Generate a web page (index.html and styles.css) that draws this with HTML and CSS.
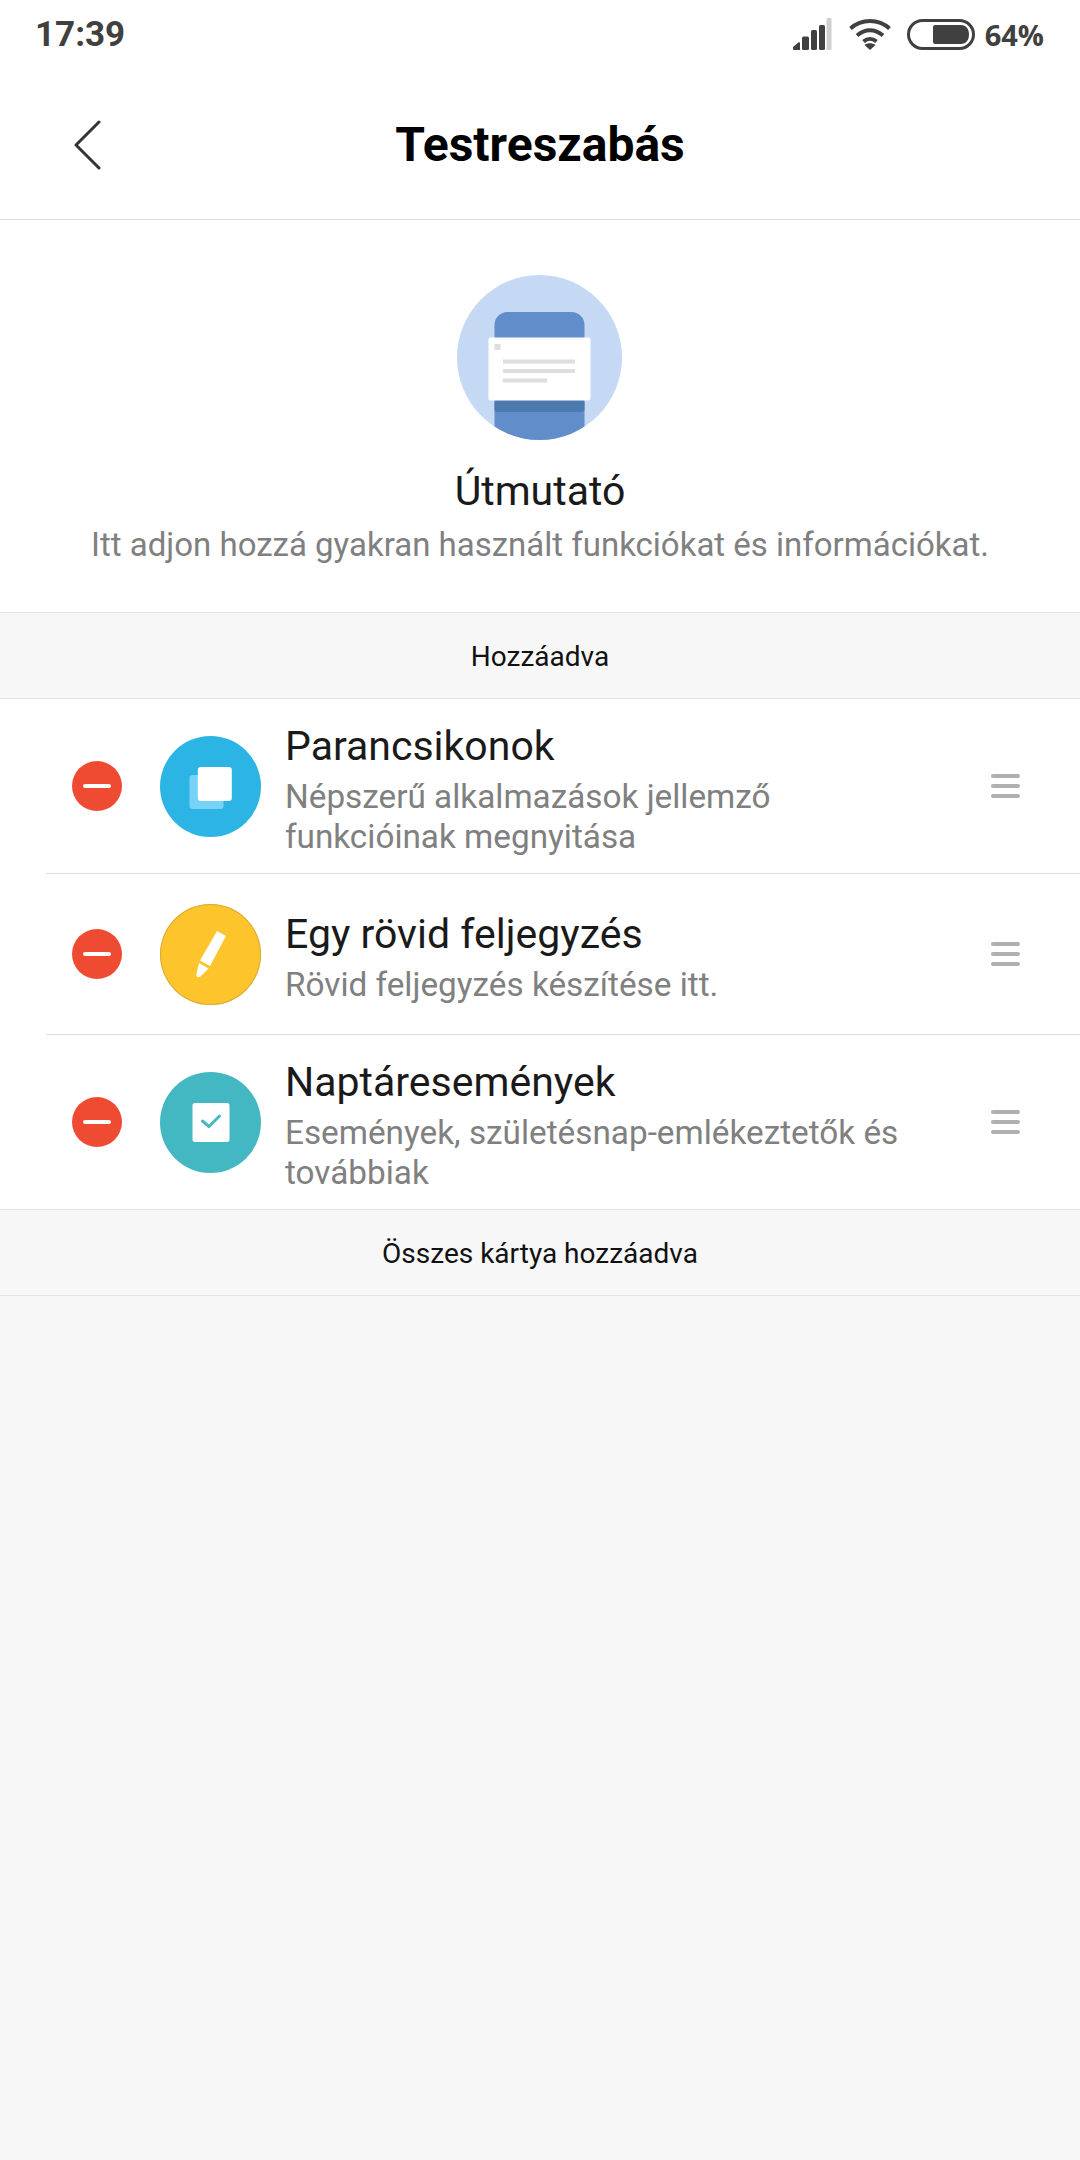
FILE: index.html
```html
<!DOCTYPE html>
<html lang="hu">
<head>
    <meta charset="UTF-8">
    <meta name="viewport" content="width=device-width, initial-scale=1.0">
    <title>Testreszabás</title>
    <link rel="stylesheet" href="styles.css">
</head>
<body>
    <!-- Status bar -->
    <div class="status-bar">
        <span class="clock">17:39</span>
        <div class="status-icons">
            <svg class="signal" width="40" height="32" viewBox="0 0 40 32">
                <path d="M1 29.5a1 1 0 0 1 .3-.7l5-4.3a1 1 0 0 1 1.7.7V32H2a1 1 0 0 1-1-1z" fill="#404040"/>
                <rect x="10" y="18.5" width="7" height="13.5" rx="1.5" fill="#404040"/>
                <rect x="19" y="12" width="6" height="20" rx="1.5" fill="#404040"/>
                <rect x="27" y="7" width="6" height="25" rx="1.5" fill="#404040"/>
                <rect x="34.500" y="0" width="5" height="32" rx="1" fill="#cfcfcf"/>
            </svg>
            <svg class="wifi" width="44" height="32" viewBox="0 0 44 32">
                <path d="M2.500 10.500C13.500 .5 30.500 .5 41.500 10.500M9 17.500c8-7 18-7 26 0M15.500 23.500c4-3.500 9-3.500 13 0" fill="none" stroke="#404040" stroke-width="4"/>
                <path d="M22 32l-5.500-5c3-2.500 8-2.500 11 0z" fill="#404040"/>
            </svg>
            <svg class="battery" width="68" height="31" viewBox="0 0 68 31">
                <rect x="1.500" y="1.500" width="65" height="28" rx="14" fill="none" stroke="#404040" stroke-width="3"/>
                <path d="M26 8a2 2 0 0 1 2-2h26c5 0 8 4 8 9.500S59 25 54 25H28a2 2 0 0 1-2-2z" fill="#404040"/>
            </svg>
            <span class="percent">64%</span>
        </div>
    </div>

    <!-- Title bar -->
    <div class="nav-bar">
        <svg class="back" width="28" height="50" viewBox="0 0 28 50">
            <path d="M26 2L3 25l23 23" fill="none" stroke="#333" stroke-width="3" stroke-linecap="round" stroke-linejoin="round"/>
        </svg>
        <h1>Testreszabás</h1>
    </div>

    <!-- Guide -->
    <div class="guide">
        <svg class="guide-art" width="165" height="165" viewBox="0 0 165 165">
            <defs>
                <clipPath id="guideClip"><circle cx="82.500" cy="82.500" r="82.500"/></clipPath>
            </defs>
            <circle cx="82.500" cy="82.500" r="82.500" fill="#c5d9f4"/>
            <g clip-path="url(#guideClip)">
                <path d="M37.500 50a13 13 0 0 1 13-13h64a13 13 0 0 1 13 13v115h-90z" fill="#618dcb"/>
                <rect x="37.500" y="125" width="90" height="12" rx="3" fill="#4d7aae"/>
            </g>
            <rect x="31.500" y="62.500" width="102" height="63" rx="2" fill="#fff"/>
            <rect x="37.500" y="69" width="6" height="6" fill="#dedede"/>
            <rect x="46" y="84.500" width="72" height="4" fill="#dedede"/>
            <rect x="46" y="94" width="72" height="4" fill="#dedede"/>
            <rect x="46" y="103.500" width="44" height="4" fill="#dedede"/>
        </svg>
        <div class="guide-title">Útmutató</div>
        <div class="guide-text">Itt adjon hozzá gyakran használt funkciókat és információkat.</div>
    </div>

    <div class="section-label">Hozzáadva</div>

    <!-- Added cards -->
    <div class="card-list">
        <div class="card card-tall">
            <span class="remove"></span>
            <span class="card-icon icon-blue">
                <svg width="60" height="60" viewBox="0 0 60 60">
                    <rect x="8.500" y="19" width="34" height="34" rx="3" fill="#76d2f6"/>
                    <rect x="16.800" y="11" width="34" height="34" rx="3" fill="#fff"/>
                </svg>
            </span>
            <div class="card-body">
                <div class="card-title">Parancsikonok</div>
                <div class="card-text">Népszerű alkalmazások jellemző funkcióinak megnyitása</div>
            </div>
            <span class="handle"><i></i><i></i><i></i></span>
        </div>
        <div class="card">
            <span class="remove"></span>
            <span class="card-icon icon-yellow">
                <svg width="60" height="60" viewBox="0 0 60 60">
                    <path d="M36 7l9 5L29 42l-10-5.500z" fill="#fff"/>
                    <path d="M18 39l9.500 5.500-8 8c-1 1-2.500 1-3.300.3-.7-.5-1-1.500-.8-2.500z" fill="#fff"/>
                </svg>
            </span>
            <div class="card-body">
                <div class="card-title">Egy rövid feljegyzés</div>
                <div class="card-text">Rövid feljegyzés készítése itt.</div>
            </div>
            <span class="handle"><i></i><i></i><i></i></span>
        </div>
        <div class="card card-tall">
            <span class="remove"></span>
            <span class="card-icon icon-teal">
                <svg width="60" height="60" viewBox="0 0 60 60">
                    <rect x="11.500" y="11" width="37" height="39" rx="2.500" fill="#fff"/>
                    <path d="M21.500 29l6.500 5.500L38.500 24" fill="none" stroke="#43b8c3" stroke-width="3" stroke-linecap="round" stroke-linejoin="round"/>
                </svg>
            </span>
            <div class="card-body">
                <div class="card-title">Naptáresemények</div>
                <div class="card-text">Események, születésnap-emlékeztetők és továbbiak</div>
            </div>
            <span class="handle"><i></i><i></i><i></i></span>
        </div>
    </div>

    <div class="section-label">Összes kártya hozzáadva</div>
</body>
</html>
```

FILE: styles.css
```css
html, body {
    margin: 0;
    padding: 0;
}
body {
    width: 1080px;
    height: 2160px;
    overflow: hidden;
    background-color: #f7f7f7;
    font-family: Roboto, sans-serif;
}
.status-bar {
    height: 68px;
    padding: 0 36px 0 35px;
    display: flex;
    justify-content: space-between;
    align-items: center;
    background-color: #fff;
    color: #404040;
}
.clock {
    font-size: 35px;
    font-weight: 700;
}
.status-icons {
    display: flex;
    align-items: center;
}
.signal {
    margin-right: 16px;
}
.wifi {
    margin-right: 15px;
}
.battery {
    margin-right: 10px;
}
.percent {
    font-family: "Open Sans", sans-serif;
    font-size: 29px;
    font-weight: 700;
}
.nav-bar {
    position: relative;
    height: 152px;
    padding-top: 2px;
    box-sizing: border-box;
    display: flex;
    align-items: center;
    justify-content: center;
    background-color: #fff;
    border-bottom: 1px solid #dcdcdc;
}
.back {
    position: absolute;
    left: 73px;
    top: 52px;
}
h1 {
    margin: 0;
    font-size: 48px;
    font-weight: 700;
    color: #000;
}
.guide {
    height: 392px;
    box-sizing: border-box;
    padding-top: 55px;
    display: flex;
    flex-direction: column;
    align-items: center;
    background-color: #fff;
}
.guide-art {
    margin-right: 2px;
}
.guide-title {
    margin-top: 26px;
    font-size: 41px;
    line-height: 50px;
    color: #1a1a1a;
}
.guide-text {
    margin-top: 7px;
    font-size: 33px;
    line-height: 44px;
    color: #808080;
}
.section-label {
    height: 83px;
    padding-top: 2px;
    display: flex;
    align-items: center;
    justify-content: center;
    border-top: 1px solid #e4e4e4;
    border-bottom: 1px solid #e4e4e4;
    font-size: 28px;
    color: #111;
}
.card-list {
    background-color: #fff;
}
.card {
    position: relative;
    height: 160px;
    display: flex;
    align-items: center;
    margin-left: 46px;
    border-bottom: 1px solid #dcdcdc;
}
.card-tall {
    height: 174px;
}
.card:last-child {
    border-bottom: none;
}
.remove {
    position: relative;
    flex: none;
    width: 50px;
    height: 50px;
    margin-left: 26px;
    border-radius: 50%;
    background-color: #ef4a32;
}
.remove::after {
    content: "";
    position: absolute;
    left: 11px;
    top: 23px;
    width: 28px;
    height: 4px;
    border-radius: 2px;
    background-color: #fff;
}
.card-icon {
    flex: none;
    width: 101px;
    height: 101px;
    margin-left: 38px;
    border-radius: 50%;
    display: flex;
    align-items: center;
    justify-content: center;
}
.icon-blue {
    background-color: #2cb5e4;
}
.icon-yellow {
    background-color: #fec42c;
    box-shadow: inset 0 0 0 1px #d9ab3c;
}
.icon-teal {
    background-color: #43b8c3;
}
.card-body {
    flex: 1;
    margin-left: 24px;
    padding-top: 6px;
}
.card-title {
    margin-bottom: 6px;
    font-size: 41px;
    line-height: 50px;
    color: #1a1a1a;
}
.card-text {
    width: 640px;
    font-size: 33.300px;
    line-height: 40px;
    color: #808080;
}
.handle {
    flex: none;
    width: 29px;
    margin-right: 60px;
    display: flex;
    flex-direction: column;
    gap: 6px;
}
.handle i {
    display: block;
    height: 4px;
    border-radius: 2px;
    background-color: #b0b0b0;
}
```
